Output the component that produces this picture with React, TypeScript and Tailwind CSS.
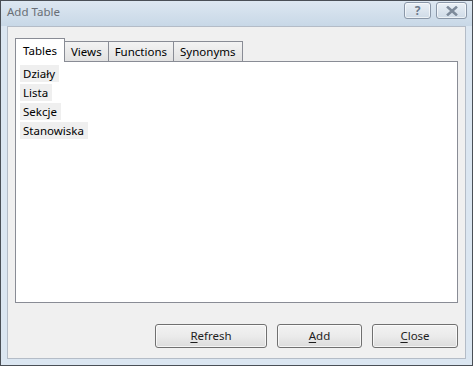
import React from "react";

const FONT = { fontFamily: '"Noto Sans", "Open Sans", sans-serif' };

const TABS = ["Tables", "Views", "Functions", "Synonyms"];
const ITEMS = ["Działy", "Lista", "Sekcje", "Stanowiska"];

function TitleButton({ children, wide }: { children: React.ReactNode; wide?: boolean }) {
  return (
    <div
      className={`h-[17px] ${wide ? "w-[31px]" : "w-[27px]"} flex items-center justify-center rounded-[3px] border border-[#8a97a8] bg-gradient-to-b from-[#eaf0f6] to-[#cfdbe7] shadow-[inset_0_0_0_1px_rgba(255,255,255,0.6)]`}
    >
      {children}
    </div>
  );
}

function DlgButton({ label, w }: { label: string; w: string }) {
  return (
    <button
      className={`${w} h-[24px] rounded-[3px] border border-[#707070] bg-gradient-to-b from-[#f2f2f2] via-[#ebebeb] to-[#dcdcdc] text-[11.5px] text-[#1e1e1e] shadow-[inset_0_0_0_1px_rgba(255,255,255,0.7)]`}
    >
      <span className="underline underline-offset-2">{label[0]}</span>
      {label.slice(1)}
    </button>
  );
}

export default function App() {
  return (
    <div className="w-[473px] h-[366px] flex flex-col border border-[#4a4f56] bg-[#dbe6f1] overflow-hidden" style={FONT}>
      {/* title bar */}
      <div className="h-[25px] flex items-center justify-between pl-[6px] pr-[5px] bg-gradient-to-b from-[#dde7f1] to-[#c8d8e7]">
        <span className="text-[11.5px] text-[#6a6f76] -mt-[3px]">Add Table</span>
        <div className="flex gap-[5px] -mt-[6px]">
          <TitleButton>
            <span className="text-[12px] font-bold text-[#6d7a8a] leading-none">?</span>
          </TitleButton>
          <TitleButton wide>
            <svg width="12" height="10" viewBox="0 0 12 10">
              <path d="M2 1.5 L10 8.5 M10 1.5 L2 8.5" stroke="#7d8a9a" strokeWidth="2.6" strokeLinecap="square" />
            </svg>
          </TitleButton>
        </div>
      </div>

      {/* client area */}
      <div className="flex-1 mx-[6px] mb-[6px] border border-[#b4bcc7] bg-[#f0f0f0] flex flex-col px-[7px] pt-[11px]">
        <div className="flex items-end h-[23px] relative z-10">
          {TABS.map((t, i) =>
            i === 0 ? (
              <div
                key={t}
                className="h-[24px] -mb-px px-[7px] flex items-center bg-white border border-b-0 border-[#898c95] text-[11.5px] text-black"
              >
                {t}
              </div>
            ) : (
              <div
                key={t}
                className="h-[20px] -ml-px px-[6px] flex items-center bg-gradient-to-b from-[#f3f3f3] to-[#e2e2e2] border border-b-0 border-[#898c95] text-[11.5px] text-black"
              >
                {t}
              </div>
            )
          )}
        </div>
        <div className="h-[242px] bg-white border border-[#898c95] flex flex-col pt-[3px] pl-[4px] gap-[2px]">
          {ITEMS.map((it) => (
            <div key={it} className="flex">
              <span className="h-[17px] flex items-center pl-[3px] pr-[4px] bg-[#efefef] text-[11.5px] text-black">
                {it}
              </span>
            </div>
          ))}
        </div>
        <div className="flex justify-end gap-[10px] mt-[21px]">
          <DlgButton label="Refresh" w="w-[112px]" />
          <DlgButton label="Add" w="w-[85px]" />
          <DlgButton label="Close" w="w-[86px]" />
        </div>
      </div>
    </div>
  );
}
